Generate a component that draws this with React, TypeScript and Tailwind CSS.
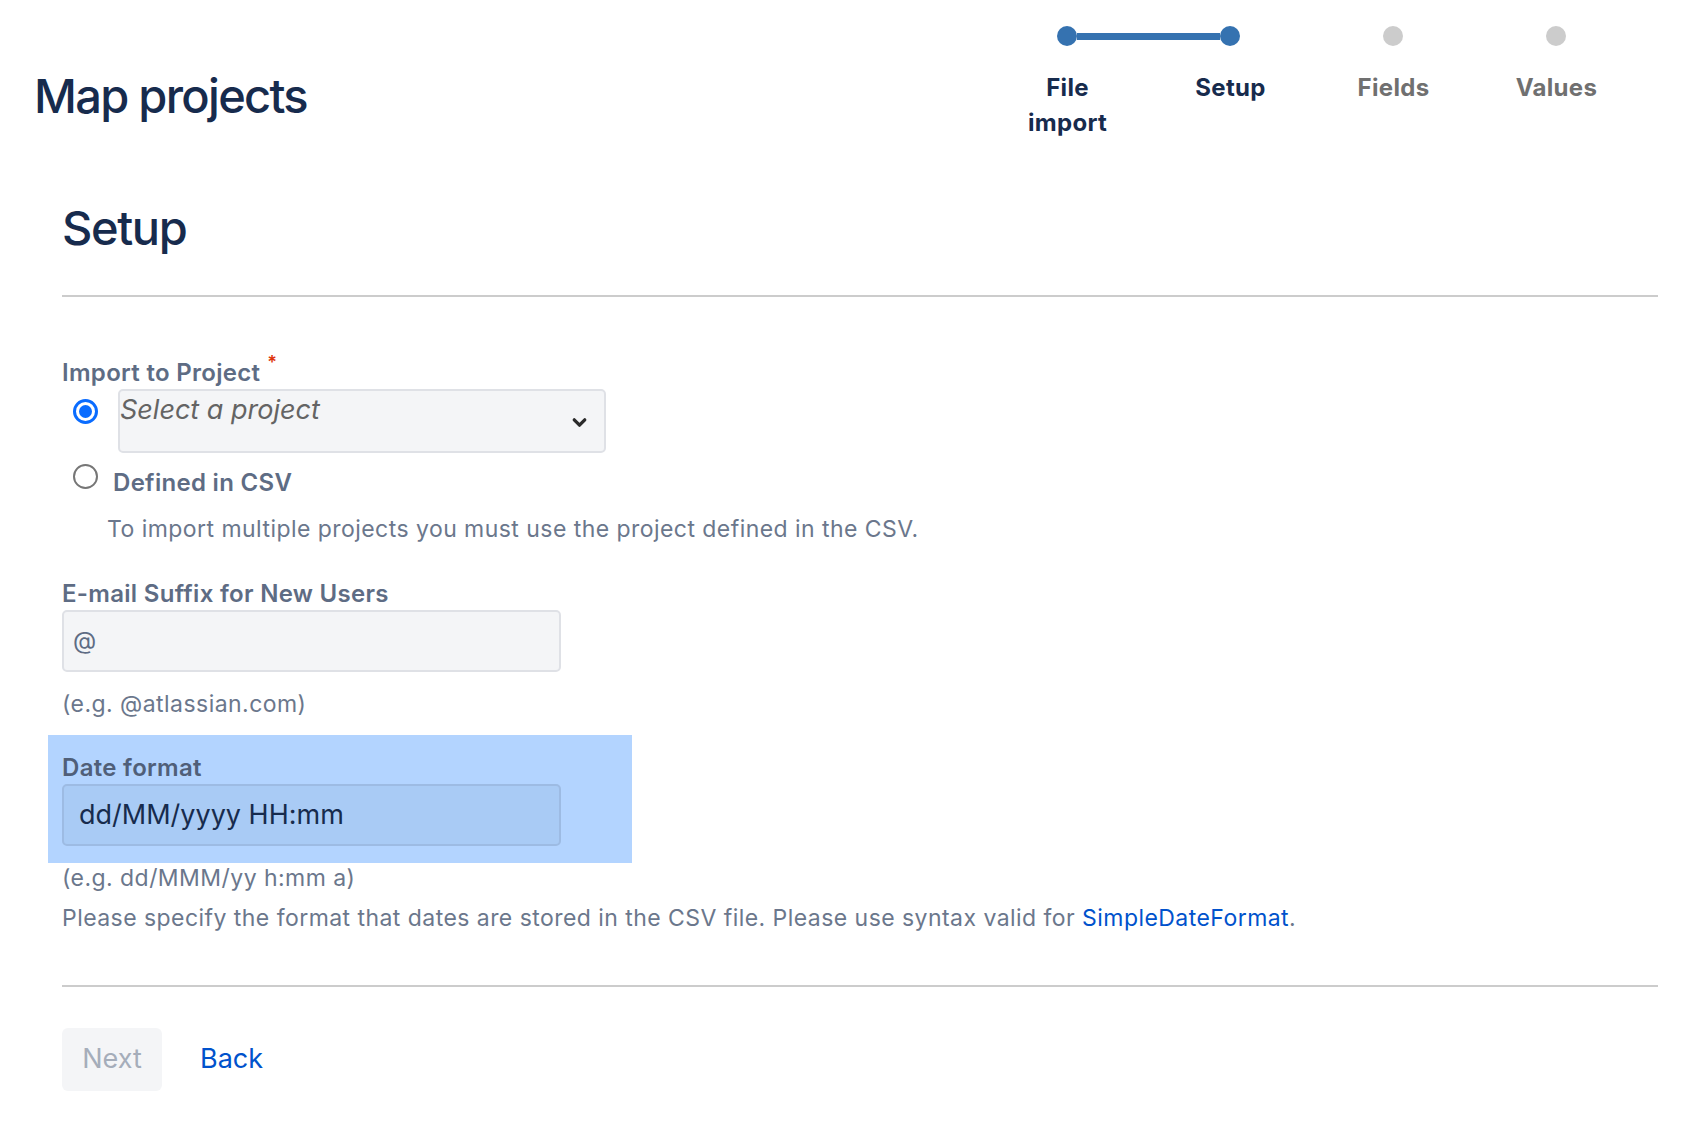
import React from 'react';
import { ChevronDown } from 'lucide-react';

const steps = [
  { label: 'File import', done: true },
  { label: 'Setup', done: true },
  { label: 'Fields', done: false },
  { label: 'Values', done: false },
];

const Stepper: React.FC = () => (
  <div className="w-[652px]">
    <div className="flex items-center pl-[71px]">
      <span className="w-[20px] h-[20px] rounded-full bg-[#3572b0]" />
      <span className="w-[143px] h-[7px] bg-[#3572b0]" />
      <span className="w-[20px] h-[20px] rounded-full bg-[#3572b0]" />
      <span className="w-[143px] h-[7px]" />
      <span className="w-[20px] h-[20px] rounded-full bg-[#cccccc]" />
      <span className="w-[143px] h-[7px]" />
      <span className="w-[20px] h-[20px] rounded-full bg-[#cccccc]" />
    </div>
    <div className="grid grid-cols-4 mt-[24px]">
      {steps.map((s) => (
        <div key={s.label} className="flex justify-center">
          <span
            className={
              'max-w-[110px] text-center text-[24px] leading-[35px] tracking-[0.3px] font-bold ' +
              (s.done ? 'text-[#172b4d]' : 'text-[#707070]')
            }
          >
            {s.label}
          </span>
        </div>
      ))}
    </div>
  </div>
);

const Radio: React.FC<{ checked?: boolean }> = ({ checked }) =>
  checked ? (
    <span className="w-[25px] h-[25px] rounded-full border-[3px] border-[#0a6cff] flex items-center justify-center shrink-0">
      <span className="w-[13px] h-[13px] rounded-full bg-[#0a6cff]" />
    </span>
  ) : (
    <span className="w-[25px] h-[25px] rounded-full border-2 border-[#767676] bg-white shrink-0" />
  );

const labelCls = 'text-[24px] leading-[30px] tracking-[0.3px] font-semibold text-[#5e6c84]';
const helpCls = 'text-[23px] leading-[30px] tracking-[0.45px] text-[#6b778c]';

export default function App() {
  return (
    <div className="min-h-[1140px] bg-white font-['Inter',sans-serif] text-[#172b4d]">
      {/* header */}
      <div className="flex justify-between items-start pl-[34px] pr-[70px] pt-[26px]">
        <h1 className="mt-[41px] text-[47px] leading-[58px] font-medium tracking-[-1.7px] text-[#172b4d]">
          Map projects
        </h1>
        <Stepper />
      </div>

      <div className="pl-[62px] pr-[50px]">
        <h2 className="mt-[59px] text-[47px] leading-[57px] font-medium tracking-[-1.4px] text-[#172b4d]">Setup</h2>
        <div className="mt-[39px] h-[2px] bg-[#cccccc]" />

        {/* Import to project */}
        <div className="mt-[61px]">
          <label className={labelCls}>
            Import to Project
            <span className="relative -top-[12px] ml-[7px] text-[18px] text-[#de350b]">*</span>
          </label>
          <div className="flex items-start -mt-[1px] pl-[11px] gap-[20px]">
            <div className="pt-[10px]">
              <Radio checked />
            </div>
            <div className="w-[488px] h-[64px] rounded-[5px] border-2 border-[#dfe1e6] bg-[#f4f5f7] flex justify-between">
              <span className="pt-[3px] text-[27px] leading-[31px] italic text-[#646464]">Select a project</span>
              <ChevronDown className="w-[21px] h-[21px] mt-[21px] mr-[14px] text-[#2b2b2b]" strokeWidth={3.8} />
            </div>
          </div>
          <div className="flex items-center mt-[2px] pl-[11px] gap-[15px]">
            <Radio />
            <span className={labelCls + ' pt-[13px]'}>Defined in CSV</span>
          </div>
          <p className={helpCls + ' mt-[16px] pl-[45px]'}>
            To import multiple projects you must use the project defined in the CSV.
          </p>
        </div>

        {/* Email suffix */}
        <div className="mt-[35px]">
          <label className={'block ' + labelCls}>E-mail Suffix for New Users</label>
          <div className="mt-[1px] w-[499px] h-[62px] rounded-[5px] border-2 border-[#dfe1e6] bg-[#f4f5f7] flex items-center pl-[9px]">
            <span className="text-[24px] text-[#5e6c84]">@</span>
          </div>
          <p className={helpCls + ' mt-[17px]'}>(e.g. @atlassian.com)</p>
        </div>

        {/* Date format */}
        <div className="mt-[16px] -ml-[14px] w-[584px] pl-[14px] pt-[18px] pb-[17px] bg-[#b3d4ff]">
          <label className={'block ' + labelCls + ' text-[#505f79]'}>Date format</label>
          <div className="mt-[1px] w-[499px] h-[62px] rounded-[5px] border-2 border-[#9dbbe3] bg-[#a9cbf5] flex items-center pl-[15px]">
            <span className="text-[27px] text-[#172b4d]">dd/MM/yyyy HH:mm</span>
          </div>
        </div>
        <p className={helpCls}>(e.g. dd/MMM/yy h:mm a)</p>
        <p className={helpCls + ' mt-[10px]'}>
          Please specify the format that dates are stored in the CSV file. Please use syntax valid for{' '}
          <a className="text-[#0052cc]">SimpleDateFormat</a>.
        </p>

        <div className="mt-[52px] h-[2px] bg-[#cccccc]" />

        <div className="mt-[41px] flex items-center gap-[38px]">
          <button className="w-[100px] h-[63px] rounded-[6px] bg-[#f4f5f7] text-[27px] text-[#a5adba]">Next</button>
          <a className="text-[27px] text-[#0052cc]">Back</a>
        </div>
      </div>
    </div>
  );
}
